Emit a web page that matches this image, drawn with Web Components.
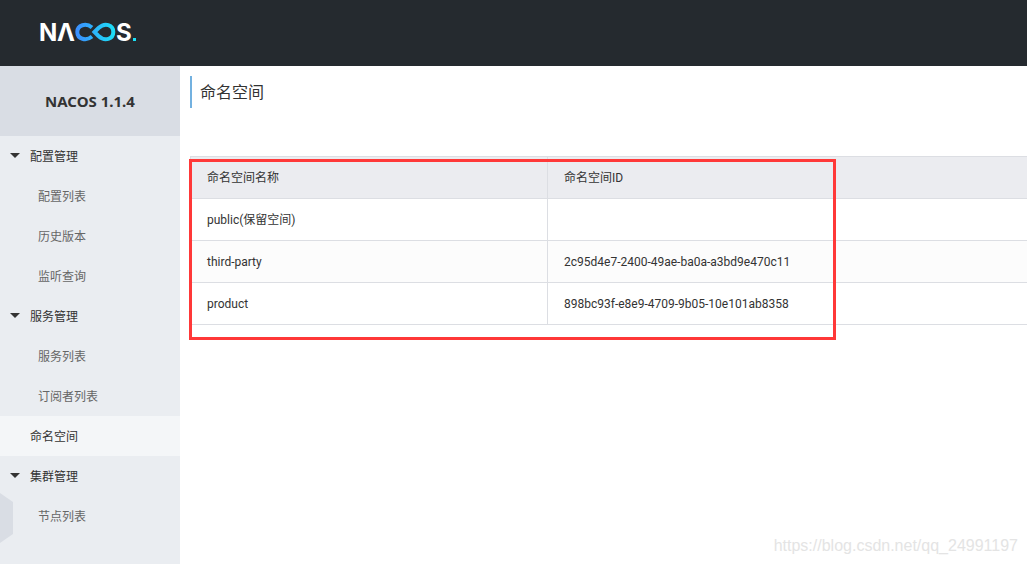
<!DOCTYPE html>
<html lang="zh-CN">
<head>
<meta charset="utf-8">
<title>Nacos</title>
<style>
html, body { height: 100%; margin: 0; }
body { font: 12px/20px Roboto, "Noto Sans CJK SC", sans-serif; color: #333; background: #fff; }
</style>
</head>
<body>
<nacos-app></nacos-app>
<script>
function define(name, markup) {
  const template = document.createElement('template');
  template.innerHTML = markup;
  customElements.define(name, class extends HTMLElement {
    constructor() {
      super();
      this.attachShadow({ mode: 'open' }).append(template.content.cloneNode(true));
    }
  });
}

define('nacos-header', `
<style>
:host { display: flex; align-items: center; height: 66px; padding: 0 36px; background: #252a2f; box-sizing: border-box; }
a { display: block; }
svg { display: block; }
text { font: 700 24px Inter, sans-serif; fill: #fff; }
</style>
<a href="#" aria-label="NACOS">
<svg width="104" height="40" viewBox="0 0 104 40">
  <defs><linearGradient id="g" gradientUnits="userSpaceOnUse" x1="39" y1="0" x2="80" y2="0"><stop offset="0" stop-color="#3c8cff"/><stop offset="1" stop-color="#1be1f6"/></linearGradient></defs>
  <text x="3" y="28">N</text><text x="21" y="28">Λ</text>
  <path d="M56 14.500C50 9.500 41.300 12 41.300 19S50 28.500 56 23.500M58.500 19L62.500 15C69 9 77.300 12 77.300 19S69 29 62.500 23Z" fill="none" stroke="url(#g)" stroke-width="4"/>
  <text x="80" y="28">S</text>
  <rect x="97" y="25" width="3" height="3" fill="#1be1f6"/>
</svg></a>`);

define('nav-item', `
<style>
:host { display: block; }
a { display: flex; align-items: center; height: 40px; padding: 2px 0 0 38px; box-sizing: border-box; color: #666; text-decoration: none; }
:host([level="top"]) a { padding-left: 30px; color: #333; }
:host([current]) a { background: #f4f6f8; }
</style>
<a href="#"><slot></slot></a>`);

define('nav-group', `
<style>
:host { display: block; }
button { display: flex; align-items: center; gap: 10px; width: 100%; height: 40px; padding: 2px 10px 0; border: 0; background: none; color: #333; font: inherit; }
svg { display: block; margin-bottom: 4px; }
</style>
<button type="button" aria-expanded="true"><svg width="10" height="5" viewBox="0 0 10 5" aria-hidden="true"><path d="M0 0H10L5 5Z" fill="#333"/></svg><slot name="title"></slot></button>
<slot></slot>`);

define('nacos-sidebar', `
<style>
:host { display: block; position: relative; background: #eaedf1; }
h1 { margin: 0; font: 700 15px/70px "Noto Sans", sans-serif; text-align: center; background: #d9dde4; }
.fold { position: absolute; left: 0; bottom: 21px; width: 13px; height: 50px; padding: 0; border: 0; background: #d9dde4; clip-path: polygon(0 0, 100% 18%, 100% 82%, 0 100%); }
</style>
<h1>NACOS 1.1.4</h1>
<nav>
  <nav-group><span slot="title">配置管理</span><nav-item>配置列表</nav-item><nav-item>历史版本</nav-item><nav-item>监听查询</nav-item></nav-group>
  <nav-group><span slot="title">服务管理</span><nav-item>服务列表</nav-item><nav-item>订阅者列表</nav-item></nav-group>
  <nav-item level="top" current>命名空间</nav-item>
  <nav-group><span slot="title">集群管理</span><nav-item>节点列表</nav-item></nav-group>
</nav>
<button class="fold" type="button" aria-label="收起"></button>`);

define('namespace-table', `
<style>
:host { display: block; position: relative; }
table { width: 100%; border-collapse: separate; border-spacing: 0; table-layout: fixed; border-top: 1px solid #dcdee3; border-left: 1px solid #dcdee3; }
th, td { height: 41px; padding: 0 16px; text-align: left; font-weight: 400; border-bottom: 1px solid #dcdee3; }
th { background: #ebecf0; }
th:first-child, td:first-child { border-right: 1px solid #dcdee3; }
.name { width: 324px; }
tbody tr:nth-child(even) { background: #fcfcfc; }
.mark { position: absolute; left: -1px; top: 3px; width: 647px; height: 181px; box-sizing: border-box; border: 3px solid #ff3838; pointer-events: none; }
</style>
<table>
  <thead><tr><th class="name" scope="col">命名空间名称</th><th scope="col">命名空间ID</th></tr></thead>
  <tbody>
    <tr><td>public(保留空间)</td><td></td></tr>
    <tr><td>third-party</td><td>2c95d4e7-2400-49ae-ba0a-a3bd9e470c11</td></tr>
    <tr><td>product</td><td>898bc93f-e8e9-4709-9b05-10e101ab8358</td></tr>
  </tbody>
</table>
<div class="mark"></div>`);

define('page-title', `
<style>
:host { display: block; }
h2 { margin: 0; padding: 2px 0 0 8px; border-left: 2px solid #73b1e0; font-size: 16px; line-height: 30px; font-weight: 400; }
</style>
<h2><slot></slot></h2>`);

define('nacos-app', `
<style>
:host { display: grid; grid-template: auto 1fr / 180px 1fr; min-height: 100%; }
nacos-header { grid-column: 1 / -1; }
main { position: relative; padding: 10px 0 0 10px; min-width: 0; overflow: hidden; }
page-title { margin-bottom: 48px; }
.watermark { position: absolute; right: 9px; bottom: 8px; font: 16px/20px "Liberation Sans", sans-serif; color: #e4e4e4; }
</style>
<nacos-header></nacos-header>
<nacos-sidebar></nacos-sidebar>
<main>
  <page-title>命名空间</page-title>
  <namespace-table></namespace-table>
  <span class="watermark">https://blog.csdn.net/qq_24991197</span>
</main>`);
</script>
</body>
</html>
